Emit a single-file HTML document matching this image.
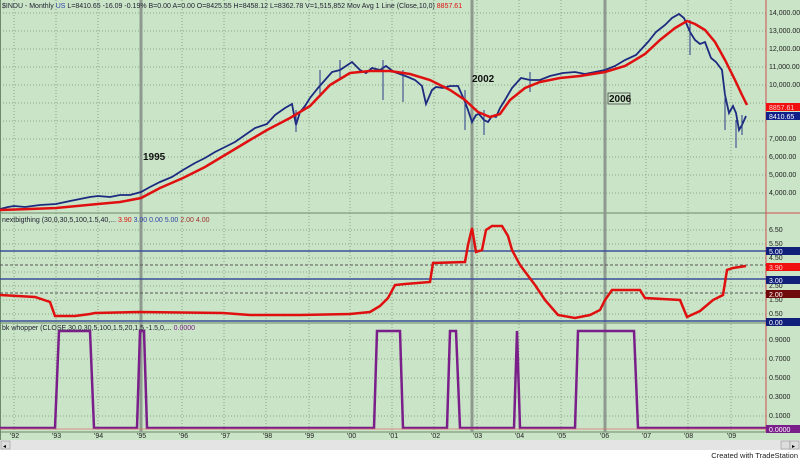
<!DOCTYPE html><html><head><style>
html,body{margin:0;padding:0;background:#fff;width:800px;height:459px;overflow:hidden;font-family:"Liberation Sans",sans-serif}
svg text{font-family:"Liberation Sans",sans-serif}
</style></head><body>
<svg width="800" height="459" viewBox="0 0 800 459" xmlns="http://www.w3.org/2000/svg">
<rect x="0" y="0" width="800" height="440" fill="#c9e4c6"/>
<rect x="0" y="440" width="800" height="19" fill="#fff"/>
<g stroke="#8aa888" stroke-width="1" stroke-dasharray="1,2">
<line x1="14" y1="0" x2="14" y2="432"/><line x1="56" y1="0" x2="56" y2="432"/><line x1="98" y1="0" x2="98" y2="432"/><line x1="182" y1="0" x2="182" y2="432"/><line x1="224" y1="0" x2="224" y2="432"/><line x1="266" y1="0" x2="266" y2="432"/><line x1="309" y1="0" x2="309" y2="432"/><line x1="350" y1="0" x2="350" y2="432"/><line x1="392" y1="0" x2="392" y2="432"/><line x1="434" y1="0" x2="434" y2="432"/><line x1="477" y1="0" x2="477" y2="432"/><line x1="519" y1="0" x2="519" y2="432"/><line x1="561" y1="0" x2="561" y2="432"/><line x1="646" y1="0" x2="646" y2="432"/><line x1="688" y1="0" x2="688" y2="432"/><line x1="731" y1="0" x2="731" y2="432"/>
</g>
<g stroke="#8aa888" stroke-width="1" stroke-dasharray="1,2">
<line x1="0" y1="13" x2="766" y2="13"/><line x1="0" y1="31" x2="766" y2="31"/><line x1="0" y1="49" x2="766" y2="49"/><line x1="0" y1="67" x2="766" y2="67"/><line x1="0" y1="85" x2="766" y2="85"/><line x1="0" y1="103" x2="766" y2="103"/><line x1="0" y1="121" x2="766" y2="121"/><line x1="0" y1="139" x2="766" y2="139"/><line x1="0" y1="157" x2="766" y2="157"/><line x1="0" y1="175" x2="766" y2="175"/><line x1="0" y1="193" x2="766" y2="193"/>
<line x1="0" y1="230" x2="766" y2="230"/><line x1="0" y1="244" x2="766" y2="244"/><line x1="0" y1="258" x2="766" y2="258"/><line x1="0" y1="272" x2="766" y2="272"/><line x1="0" y1="286" x2="766" y2="286"/><line x1="0" y1="300" x2="766" y2="300"/><line x1="0" y1="314" x2="766" y2="314"/>
<line x1="0" y1="340" x2="766" y2="340"/><line x1="0" y1="359" x2="766" y2="359"/><line x1="0" y1="378" x2="766" y2="378"/><line x1="0" y1="397" x2="766" y2="397"/><line x1="0" y1="416" x2="766" y2="416"/>
</g>
<line x1="0" y1="213" x2="766" y2="213" stroke="#6d8a6b"/>
<line x1="0" y1="323" x2="766" y2="323" stroke="#6d8a6b"/>
<line x1="0" y1="432" x2="766" y2="432" stroke="#6d8a6b"/>
<line x1="766" y1="0" x2="766" y2="432" stroke="#d05050"/>
<line x1="766" y1="213" x2="800" y2="213" stroke="#d05050"/>
<line x1="766" y1="323" x2="800" y2="323" stroke="#d05050"/>
<line x1="0.5" y1="0" x2="0.5" y2="440" stroke="#6d8a6b"/>
<g stroke="#8e9a8e" stroke-width="3">
<line x1="141" y1="0" x2="141" y2="432"/><line x1="472" y1="0" x2="472" y2="432"/><line x1="605" y1="0" x2="605" y2="432"/>
</g>
<g stroke="#3a4f9a" stroke-width="1.5">
<line x1="0" y1="251" x2="766" y2="251"/><line x1="0" y1="279" x2="766" y2="279"/><line x1="0" y1="321" x2="766" y2="321"/>
</g>
<g stroke="#555" stroke-width="1" stroke-dasharray="3,2">
<line x1="0" y1="265" x2="766" y2="265"/><line x1="0" y1="293" x2="766" y2="293"/>
</g>
<polyline fill="none" stroke="#1c2a80" stroke-width="1.8" points="0,209 8,207 14,206 25,207 40,205 56,204 70,201 80,199 90,197 98,196 110,197 120,195 130,195 141,192 150,187 160,182 172,177 183,170 195,163 205,158 215,152 225,147 235,142 245,135 255,128 267,124 275,115 285,108 292,104 296,125 300,112 305,106 310,98 318,88 325,80 332,72 340,70 346,66 352,62 360,70 366,73 372,68 380,70 386,66 394,72 400,74 408,77 415,80 422,86 426,104 432,90 436,87 443,88 450,86 458,86 462,95 465,102 468,110 472,122 476,115 479,114 484,120 488,122 492,116 496,117 500,108 505,100 512,88 521,78 530,80 540,80 550,76 563,73 575,72 585,74 595,72 605,70 615,66 625,60 636,55 648,42 656,32 665,25 672,18 679,14 684,18 690,32 695,40 700,44 705,42 711,58 716,62 722,70 725,95 729,113 733,106 736,113 739,130 742,125 746,116"/>
<g stroke="#2b3a8a" stroke-width="1">
<line x1="296" y1="110" x2="296" y2="132"/><line x1="320" y1="70" x2="320" y2="95"/><line x1="340" y1="60" x2="340" y2="80"/><line x1="383" y1="60" x2="383" y2="100"/><line x1="403" y1="70" x2="403" y2="102"/><line x1="465" y1="90" x2="465" y2="130"/><line x1="484" y1="110" x2="484" y2="135"/><line x1="530" y1="72" x2="530" y2="92"/><line x1="690" y1="20" x2="690" y2="55"/><line x1="725" y1="90" x2="725" y2="130"/><line x1="736" y1="120" x2="736" y2="148"/><line x1="742" y1="115" x2="742" y2="135"/>
</g>
<polyline fill="none" stroke="#e01010" stroke-width="2.5" points="0,210 30,209 56,208 98,204 120,202 141,198 160,188 183,178 205,167 225,155 250,140 267,130 290,118 310,106 330,85 350,73 370,71 390,71 410,74 430,80 450,90 465,100 478,112 490,117 500,114 510,100 525,88 540,82 560,78 580,76 605,72 625,66 645,54 660,40 675,28 687,21 695,24 705,30 715,42 725,60 735,80 742,95 747,105"/>
<text x="143" y="160" font-size="10" font-weight="bold" fill="#111">1995</text>
<text x="472" y="82" font-size="10" font-weight="bold" fill="#111">2002</text>
<rect x="608" y="93" width="22" height="11" fill="#c9e4c6" stroke="#444" stroke-width="0.8"/>
<text x="609" y="102" font-size="10" font-weight="bold" fill="#111">2006</text>
<polyline fill="none" stroke="#e01010" stroke-width="2.5" points="0,295 35,297 50,302 55,316 75,316 90,314 95,313 140,312 223,313 250,315 300,315 350,314 370,312 380,306 388,298 395,285 405,284 430,282 433,263 465,262 468,245 472,228 476,252 482,250 486,230 492,226 502,226 508,236 512,250 520,265 535,285 545,300 558,315 575,318 590,315 600,310 605,300 612,290 640,290 645,298 680,300 687,317 700,311 713,300 723,295 727,270 733,268 746,266"/>
<polyline fill="none" stroke="#7a1f8a" stroke-width="2.5" points="0,428 55,428 59,331 90,331 94,428 137,428 140,331 144,331 147,428 374,428 377,331 400,331 403,428 447,428 450,331 456,331 460,428 514,428 517,331 520,428 575,428 578,331 634,331 638,428 766,428"/>
<line x1="0" y1="429" x2="766" y2="429" stroke="#e07070" stroke-width="0.8"/>
<text x="2" y="8" font-size="7" fill="#223">$INDU - Monthly <tspan fill="#3344aa">US</tspan>  L=8410.65  -16.09  -0.19%  B=0.00  A=0.00  O=8425.55  H=8458.12  L=8362.78  V=1,515,852  Mov Avg 1 Line (Close,10,0)  <tspan fill="#e01010">8857.61</tspan></text>
<text x="2" y="222" font-size="7" fill="#223">nextbigthing (30,0,30,5,100,1.5,40,...  <tspan fill="#e01010">3.90</tspan>  <tspan fill="#3344aa">3.00  0.00  5.00</tspan>  <tspan fill="#a03030">2.00  4.00</tspan></text>
<text x="2" y="330" font-size="7" fill="#223">bk whopper (CLOSE,30,0,30,5,100,1.5,20,1.5,-1.5,0,...  <tspan fill="#7a1f8a">0.0000</tspan></text>
<g font-size="7" fill="#222">
<text x="769" y="15">14,000.00</text><text x="769" y="33">13,000.00</text><text x="769" y="51">12,000.00</text><text x="769" y="69">11,000.00</text><text x="769" y="87">10,000.00</text><text x="769" y="141">7,000.00</text><text x="769" y="159">6,000.00</text><text x="769" y="177">5,000.00</text><text x="769" y="195">4,000.00</text>
<text x="769" y="232">6.50</text><text x="769" y="246">5.50</text><text x="769" y="260">4.50</text><text x="769" y="288">2.50</text><text x="769" y="302">1.50</text><text x="769" y="316">0.50</text>
<text x="769" y="342">0.9000</text><text x="769" y="361">0.7000</text><text x="769" y="380">0.5000</text><text x="769" y="399">0.3000</text><text x="769" y="418">0.1000</text>
</g>
<rect x="766" y="103" width="34" height="8" fill="#f01010"/><text x="769" y="110" font-size="7" fill="#fcc">8857.61</text>
<rect x="766" y="112" width="34" height="8" fill="#10208a"/><text x="769" y="119" font-size="7" fill="#fff">8410.65</text>
<rect x="766" y="247" width="34" height="8" fill="#10207a"/><text x="769" y="254" font-size="7" fill="#fff">5.00</text>
<rect x="766" y="263" width="34" height="8" fill="#f01010"/><text x="769" y="270" font-size="7" fill="#fcc">3.90</text>
<rect x="766" y="276" width="34" height="8" fill="#10207a"/><text x="769" y="283" font-size="7" fill="#fff">3.00</text>
<rect x="766" y="290" width="34" height="8" fill="#700a0a"/><text x="769" y="297" font-size="7" fill="#fff">2.00</text>
<rect x="766" y="318" width="34" height="8" fill="#10207a"/><text x="769" y="325" font-size="7" fill="#fff">0.00</text>
<rect x="766" y="425" width="34" height="8" fill="#7a1f8a"/><text x="769" y="432" font-size="7" fill="#fff">0.0000</text>
<g font-size="7" fill="#222">
<text x="10" y="438">'92</text><text x="52" y="438">'93</text><text x="94" y="438">'94</text><text x="137" y="438">'95</text><text x="179" y="438">'96</text><text x="221" y="438">'97</text><text x="263" y="438">'98</text><text x="305" y="438">'99</text><text x="347" y="438">'00</text><text x="389" y="438">'01</text><text x="431" y="438">'02</text><text x="473" y="438">'03</text><text x="515" y="438">'04</text><text x="557" y="438">'05</text><text x="600" y="438">'06</text><text x="642" y="438">'07</text><text x="684" y="438">'08</text><text x="727" y="438">'09</text>
</g>
<rect x="0" y="440" width="800" height="10" fill="#e4e4e4"/>
<rect x="1" y="441" width="9" height="8" fill="#ddd" stroke="#888" stroke-width="0.5"/><text x="3" y="448" font-size="6">◂</text>
<rect x="781" y="441" width="9" height="8" fill="#ddd" stroke="#888" stroke-width="0.5"/><rect x="790" y="441" width="9" height="8" fill="#ddd" stroke="#888" stroke-width="0.5"/><text x="792" y="448" font-size="6">▸</text>
<text x="798" y="458" font-size="7.5" fill="#222" text-anchor="end">Created with TradeStation</text>
</svg>
</body></html>
